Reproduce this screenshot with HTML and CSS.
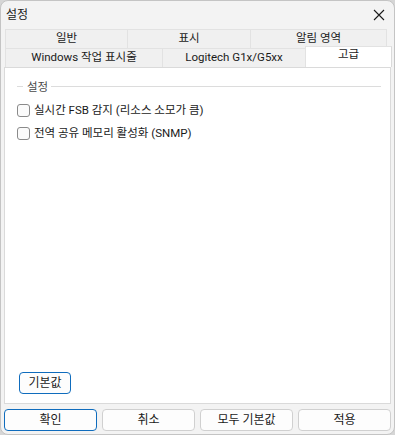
FILE: index.html
```html
<!DOCTYPE html>
<html lang="ko">
<head>
    <meta charset="UTF-8">
    <title>설정</title>
    <link rel="stylesheet" href="styles.css">
</head>
<body>
    <div class="window">
        <div class="titlebar">
            <span class="title">설정</span>
            <svg class="close" width="12" height="12" viewBox="0 0 12 12">
                <path d="M1 1 L11 11 M11 1 L1 11" stroke="#1a1a1a" stroke-width="1.1" fill="none"/>
            </svg>
        </div>

        <div class="tabs">
            <div class="tab-row row-1">
                <div class="tab">일반</div>
                <div class="tab">표시</div>
                <div class="tab">알림 영역</div>
            </div>
            <div class="tab-row row-2">
                <div class="tab">Windows 작업 표시줄</div>
                <div class="tab">Logitech G1x/G5xx</div>
                <div class="tab active">고급</div>
            </div>
        </div>

        <div class="panel">
            <div class="group-title">
                <span class="line short"></span>
                <span class="label">설정</span>
                <span class="line"></span>
            </div>
            <label class="check"><span class="box"></span>실시간 FSB 감지 (리소스 소모가 큼)</label>
            <label class="check"><span class="box"></span>전역 공유 메모리 활성화 (SNMP)</label>
            <button class="btn btn-default reset">기본값</button>
        </div>

        <div class="buttons">
            <button class="btn btn-default">확인</button>
            <button class="btn">취소</button>
            <button class="btn">모두 기본값</button>
            <button class="btn">적용</button>
        </div>
    </div>
</body>
</html>
```

FILE: styles.css
```css
body {
    margin: 0;
    background: #d6d6d6;
    font-family: Roboto, "Noto Sans CJK KR", sans-serif;
    font-size: 11.5px;
    color: #1a1a1a;
}
.window {
    width: 395px;
    height: 435px;
    box-sizing: border-box;
    background: #f3f3f3;
    border: 1px solid #c4c4c4;
    border-radius: 8px;
    display: flex;
    flex-direction: column;
    overflow: hidden;
}
.titlebar {
    height: 27px;
    display: flex;
    align-items: center;
    justify-content: space-between;
    padding: 0 9px 0 5px;
}
.title {
    font-size: 12px;
    line-height: 1;
}
.close {
    display: block;
}

/* Tabs */
.tabs {
    margin: 1px 3px 0 4px;
}
.tab-row {
    display: grid;
    height: 19px;
}
.row-1 {
    grid-template-columns: 122px 123px 137px;
}
.row-2 {
    grid-template-columns: 157px 143px 87px;
}
.tab {
    box-sizing: border-box;
    display: flex;
    align-items: center;
    justify-content: center;
    background: #f0f0f0;
    border: 1px solid #e2e2e2;
    border-right: none;
    border-bottom: none;
    line-height: 1;
}
.row-1 .tab:last-child {
    border-right: 1px solid #e2e2e2;
}
.tab.active {
    background: #fff;
    border-right: 1px solid #dadada;
    margin-top: -2px;
    height: 21px;
    padding-bottom: 4px;
    position: relative;
    z-index: 1;
}

/* Content panel */
.panel {
    height: 337px;
    margin: 0 3px;
    box-sizing: border-box;
    background: #fff;
    border: 1px solid #dadada;
    display: flex;
    flex-direction: column;
    padding: 10px 9px 9px 12px;
}
.group-title {
    display: flex;
    align-items: center;
    height: 16px;
    color: #4a4a4a;
}
.group-title .line {
    flex: 1;
    height: 1px;
    background: #dcdcdc;
}
.group-title .line.short {
    flex: none;
    width: 6px;
}
.group-title .label {
    padding: 0 3px 0 4px;
}
.check {
    display: flex;
    align-items: center;
    height: 13px;
    margin-top: 10px;
    line-height: 1;
}
.box {
    width: 11px;
    height: 11px;
    border: 1px solid #8a8a8a;
    border-radius: 3px;
    background: #fbfbfb;
    margin-right: 4px;
}

/* Buttons */
.btn {
    font-family: inherit;
    font-size: 12px;
    color: #1a1a1a;
    background: #fdfdfd;
    border: 1px solid #d0d0d0;
    border-radius: 4px;
    padding: 0;
    height: 22px;
    line-height: 1;
}
.btn-default {
    border-color: #0f6cbd;
}
.reset {
    margin-top: auto;
    width: 52px;
    margin-left: 2px;
}
.buttons {
    display: grid;
    grid-template-columns: repeat(4, 93px);
    gap: 5px;
    margin: 5px 0 0 3px;
}
```
